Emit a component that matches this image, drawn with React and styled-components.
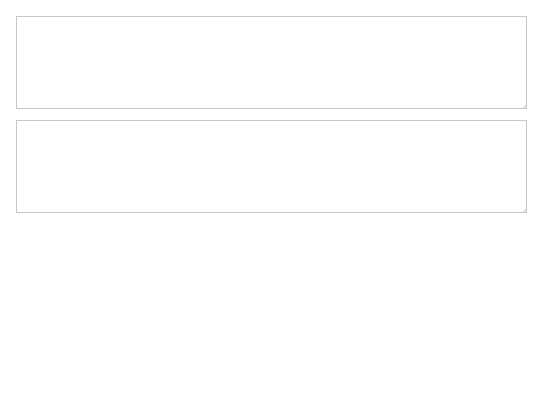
import React from "react"
import styled, { createGlobalStyle } from "styled-components"

const GlobalStyle = createGlobalStyle`
  body {
    margin: 0;
    background: #fff;
    font-family: "Liberation Sans", Arial, sans-serif;
  }
`

const Wrapper = styled.div`
  display: flex;
  flex-direction: column;
  gap: 11px;
  padding: 16px;
`

const TextArea = styled.textarea`
  display: block;
  box-sizing: border-box;
  width: 511px;
  height: 93px;
  margin: 0;
  padding: 4px;
  border: 1px solid #c8c8c8;
  border-radius: 0;
  background: #fff;
  font-family: inherit;
  font-size: 14px;
  outline: none;

  &::-webkit-resizer {
    background:
      linear-gradient(135deg, transparent 70%, #c8c8c8 70%, #c8c8c8 76%, transparent 76%, transparent 86%, #c8c8c8 86%, #c8c8c8 92%, transparent 92%)
      no-repeat right bottom / 6px 6px;
  }
`

export default function App() {
  return (
    <>
      <GlobalStyle />
      <Wrapper>
        <TextArea />
        <TextArea />
      </Wrapper>
    </>
  )
}
